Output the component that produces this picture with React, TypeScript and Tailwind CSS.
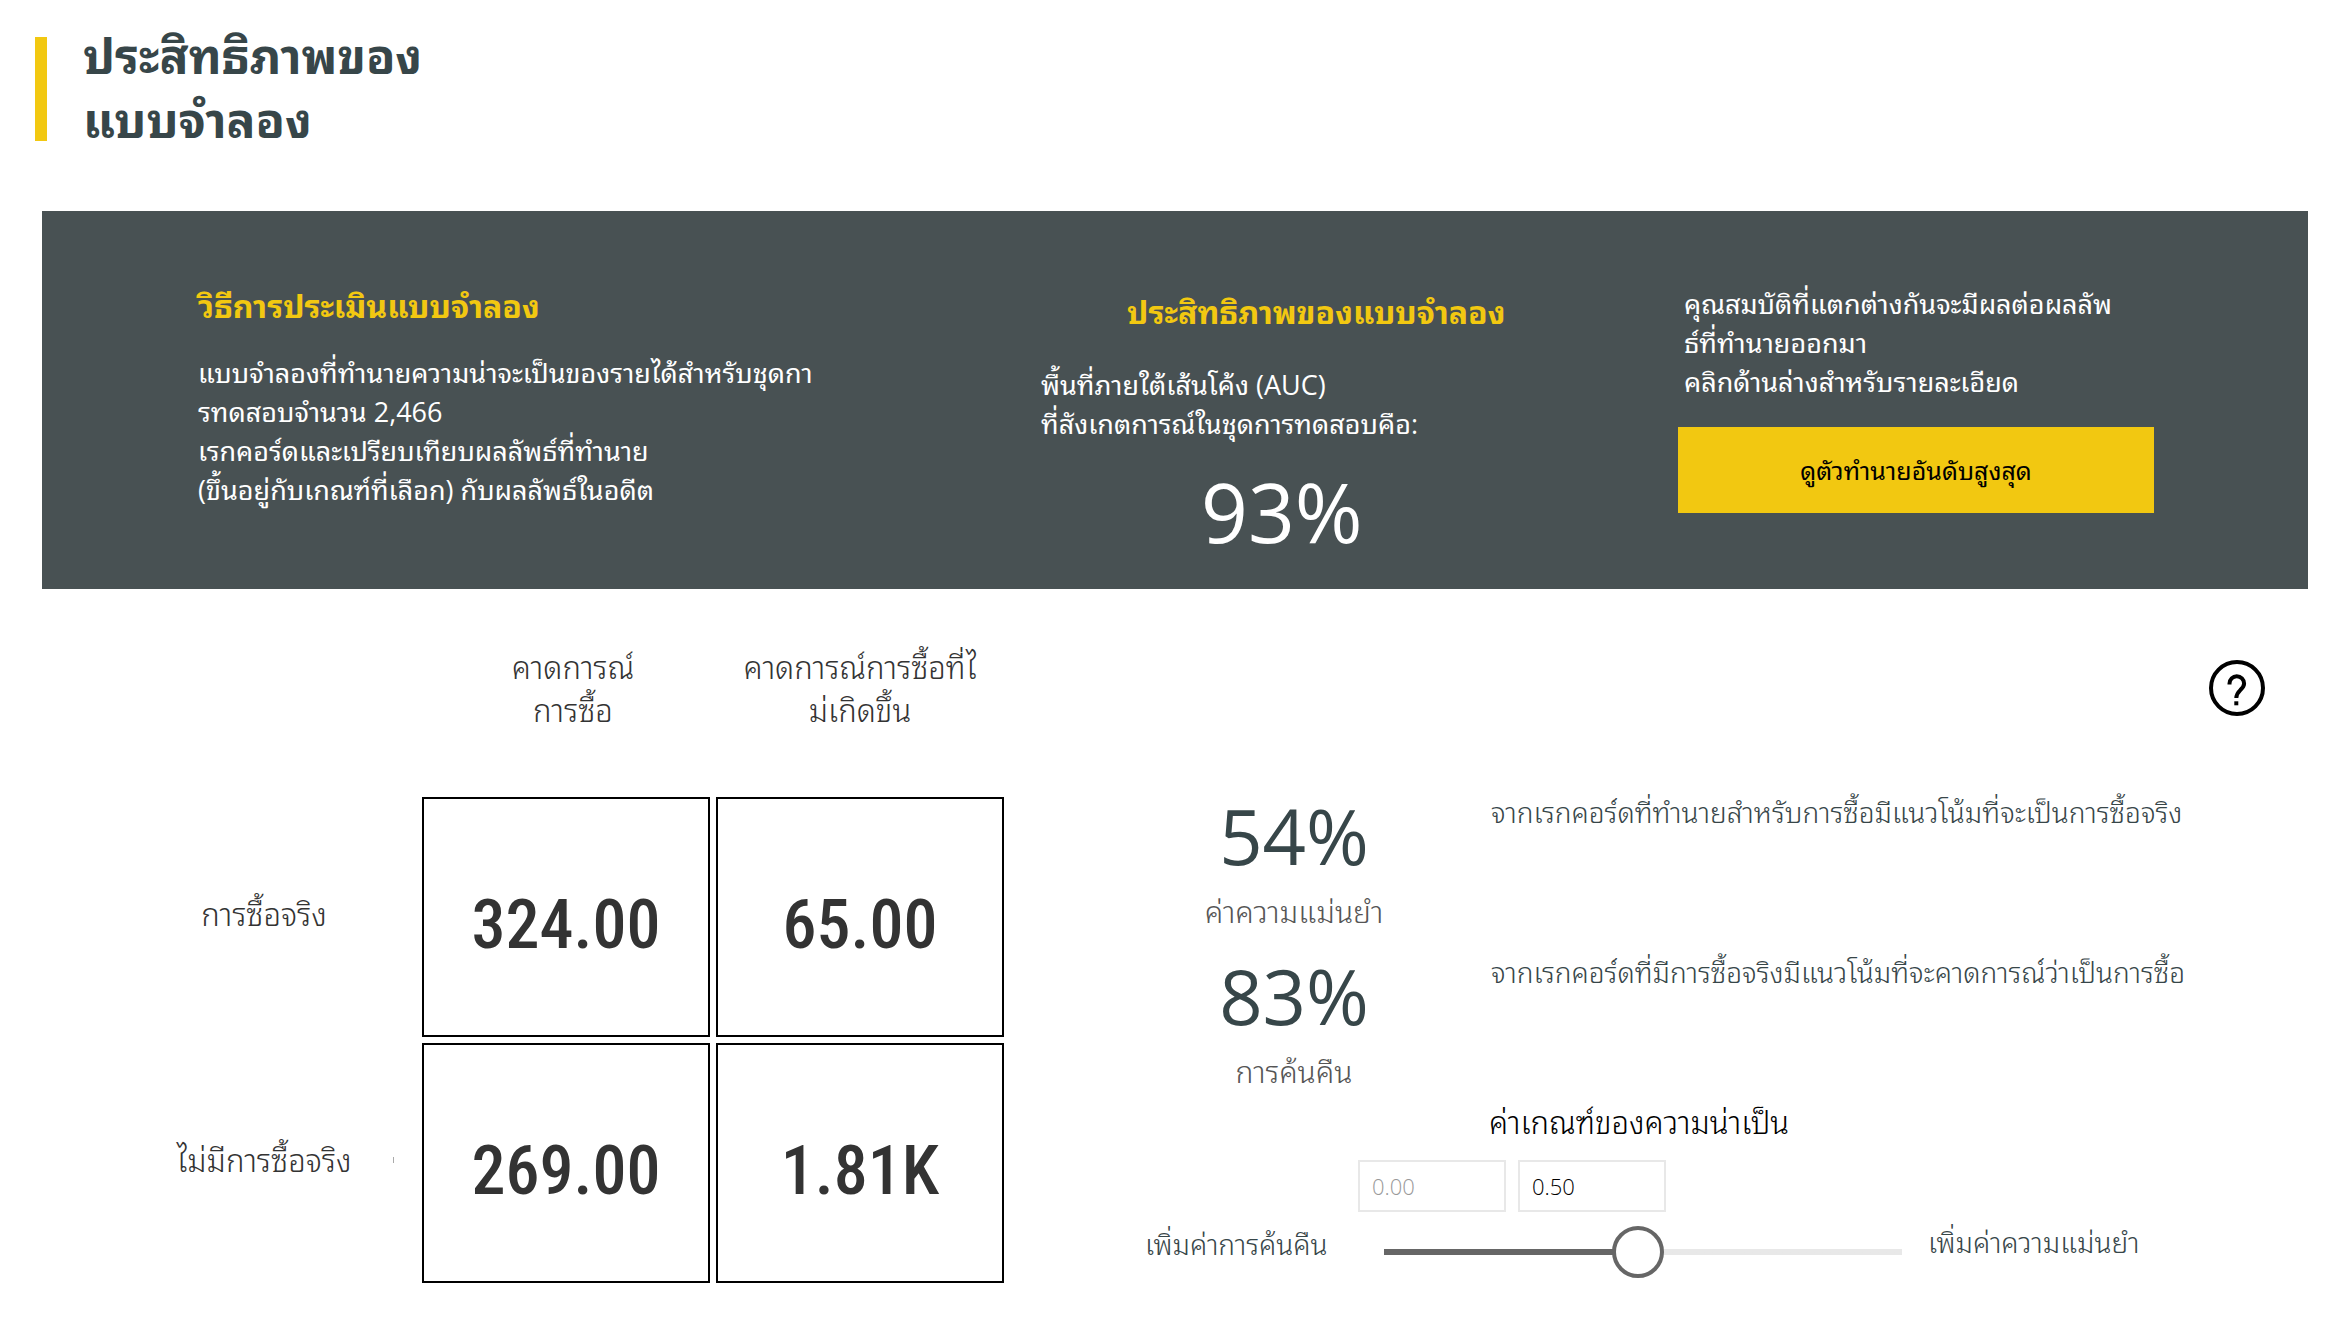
import { useState } from "react";

const rows = [
  { label: "การซื้อจริง", cells: ["324.00", "65.00"] },
  { label: "ไม่มีการซื้อจริง", cells: ["269.00", "1.81K"], tick: true },
];

const metrics = [
  { value: "54%", label: "ค่าความแม่นยำ", note: "จากเรกคอร์ดที่ทำนายสำหรับการซื้อมีแนวโน้มที่จะเป็นการซื้อจริง" },
  { value: "83%", label: "การค้นคืน", note: "จากเรกคอร์ดที่มีการซื้อจริงมีแนวโน้มที่จะคาดการณ์ว่าเป็นการซื้อ" },
];

function Header() {
  return (
    <header className="flex items-start gap-9 pt-6 pl-[35px]">
      <span className="mt-[13px] h-[104px] w-3 shrink-0 bg-[#f2c811]" />
      <h1 className="text-[48px] leading-[64px] font-bold text-[#374649]">
        ประสิทธิภาพของ
        <br />
        แบบจำลอง
      </h1>
    </header>
  );
}

function Banner() {
  return (
    <section className="mt-[59px] mr-7 ml-[42px] grid grid-cols-[843fr_637fr_630fr] bg-[#485153] pb-[30px] pl-[156px] text-[27px] leading-[39px] whitespace-nowrap text-white">
      <div className="pt-[75px]">
        <h2 className="text-[32px] leading-10 font-bold text-[#f2c811]">วิธีการประเมินแบบจำลอง</h2>
        <p className="mt-[27px]">
          แบบจำลองที่ทำนายความน่าจะเป็นของรายได้สำหรับชุดกา
          <br />
          รทดสอบจำนวน 2,466
          <br />
          เรกคอร์ดและเปรียบเทียบผลลัพธ์ที่ทำนาย
          <br />
          (ขึ้นอยู่กับเกณฑ์ที่เลือก) กับผลลัพธ์ในอดีต
        </p>
      </div>
      <div className="pt-[81px]">
        <h2 className="pl-[86px] text-[32px] leading-10 font-bold text-[#f2c811]">ประสิทธิภาพของแบบจำลอง</h2>
        <p className="mt-[33px]">
          พื้นที่ภายใต้เส้นโค้ง (AUC)
          <br />
          ที่สังเกตการณ์ในชุดการทดสอบคือ:
        </p>
        <p className="mt-5 pl-40 text-[82px] leading-[96px]">93%</p>
      </div>
      <div className="pt-[73px]">
        <p className="pl-1.5">
          คุณสมบัติที่แตกต่างกันจะมีผลต่อผลลัพ
          <br />
          ธ์ที่ทำนายออกมา
          <br />
          คลิกด้านล่างสำหรับรายละเอียด
        </p>
        <button type="button" className="mt-[26px] h-[86px] w-[476px] bg-[#f2c811] text-[25px] text-black">
          ดูตัวทำนายอันดับสูงสุด
        </button>
      </div>
    </section>
  );
}

function ConfusionMatrix() {
  return (
    <table className="w-full table-fixed border-separate border-spacing-[6px] text-[31px] leading-[43px] text-[#333]">
      <colgroup>
        <col className="w-[304px]" />
        <col />
        <col />
      </colgroup>
      <thead>
        <tr className="h-[145px] align-top whitespace-nowrap">
          <td />
          <th scope="col" className="pl-3.5 font-light">
            คาดการณ์
            <br />
            การซื้อ
          </th>
          <th scope="col" className="font-light">
            คาดการณ์การซื้อที่ไ
            <br />
            ม่เกิดขึ้น
          </th>
        </tr>
      </thead>
      <tbody>
        {rows.map((row) => (
          <tr key={row.label} className="h-60">
            <th scope="row" className="relative pb-1.5 font-light">
              {row.label}
              {row.tick && <span className="absolute top-1/2 right-[22px] -mt-1.5 h-1.5 w-px bg-[#aaa]" />}
            </th>
            {row.cells.map((cell) => (
              <td key={cell} className="border-2 border-black pt-4 text-center font-['Roboto_Condensed',Roboto,sans-serif] text-[68px] leading-[72px] font-medium">
                {cell}
              </td>
            ))}
          </tr>
        ))}
      </tbody>
    </table>
  );
}

function HelpButton() {
  return (
    <button type="button" aria-label="ความช่วยเหลือ" className="mr-[71px] block size-14 self-end">
      <svg viewBox="0 0 56 56" fill="none" stroke="#000" strokeWidth="4" className="size-full">
        <circle cx="28" cy="28" r="26" />
        <path d="M20.500 24.500v-1a7.300 7.300 0 0 1 14.600 0c0 3-1.600 4.500-3.800 6.600-2.300 2.200-4 3.900-4 8" />
        <path d="M25.300 43.300h4" />
      </svg>
    </button>
  );
}

function Metrics() {
  return (
    <dl className="mt-[76px] flex flex-col gap-5 leading-10 whitespace-nowrap">
      {metrics.map((m) => (
        <div key={m.label} className="grid h-[140px] grid-cols-[390fr_845fr] pl-[91px]">
          <div className="flex flex-col-reverse justify-end gap-3 pr-1 text-center">
            <dt className="text-[30px] font-light text-[#555]">{m.label}</dt>
            <dd className="text-[76px] leading-[88px] text-[#374649]">{m.value}</dd>
          </div>
          <dd className="text-[28px] font-light text-[#374649]">{m.note}</dd>
        </div>
      ))}
    </dl>
  );
}

function Threshold() {
  const [value, setValue] = useState(0.49);
  const box = "h-[52px] w-[148px] border-2 border-[#e8e8e8] px-3 text-[22px] font-light";
  return (
    <div className="mt-2.5 grid grid-cols-[213fr_570fr_408fr] pl-[135px] leading-10 font-light whitespace-nowrap text-[#374649]">
      <label htmlFor="threshold" className="col-start-2 pr-2 text-center text-[31px] text-black">
        ค่าเกณฑ์ของความน่าเป็น
      </label>
      <div className="col-start-2 mt-[18px] flex gap-3">
        <input aria-label="ค่าต่ำสุด" className={`${box} text-[#999]`} defaultValue="0.00" disabled />
        <input aria-label="ค่าสูงสุด" className={`${box} text-black`} defaultValue="0.50" />
      </div>
      <span className="col-start-1 mt-3 text-[28px]">เพิ่มค่าการค้นคืน</span>
      <div className="mt-3.5 px-[26px]">
        <input
          id="threshold"
          type="range"
          min={0}
          max={1}
          step={0.01}
          value={value}
          onChange={(e) => setValue(Number(e.target.value))}
          className="block h-[52px] w-full appearance-none bg-transparent [&::-webkit-slider-runnable-track]:h-1.5 [&::-webkit-slider-runnable-track]:bg-linear-to-r [&::-webkit-slider-runnable-track]:from-[#666] [&::-webkit-slider-runnable-track]:from-50% [&::-webkit-slider-runnable-track]:to-[#e8e8e8] [&::-webkit-slider-runnable-track]:to-50% [&::-webkit-slider-thumb]:-mt-[23px] [&::-webkit-slider-thumb]:size-[52px] [&::-webkit-slider-thumb]:appearance-none [&::-webkit-slider-thumb]:rounded-full [&::-webkit-slider-thumb]:border-4 [&::-webkit-slider-thumb]:border-[#666] [&::-webkit-slider-thumb]:bg-white"
        />
      </div>
      <span className="mt-2.5 text-[28px]">เพิ่มค่าความแม่นยำ</span>
    </div>
  );
}

export default function App() {
  return (
    <main className="min-h-screen overflow-x-hidden bg-white font-['Open_Sans','Noto_Sans_Thai_Looped','Noto_Sans',sans-serif]">
      <Header />
      <Banner />
      <div className="grid grid-cols-[1010fr_1326fr]">
        <section className="mt-[51px] pl-[106px]">
          <ConfusionMatrix />
        </section>
        <section className="mt-[71px] flex flex-col">
          <HelpButton />
          <Metrics />
          <Threshold />
        </section>
      </div>
    </main>
  );
}
